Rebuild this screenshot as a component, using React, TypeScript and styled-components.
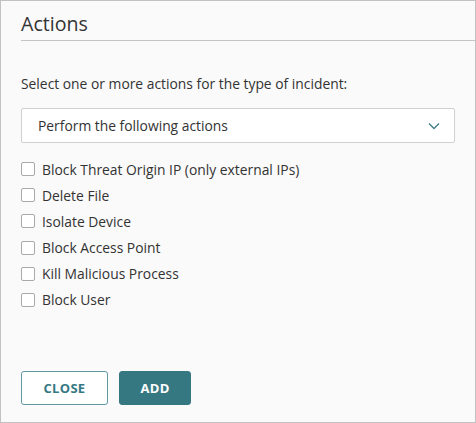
import React from 'react';
import styled, { createGlobalStyle } from 'styled-components';

const actions = [
  'Block Threat Origin IP (only external IPs)',
  'Delete File',
  'Isolate Device',
  'Block Access Point',
  'Kill Malicious Process',
  'Block User',
];

const GlobalStyle = createGlobalStyle`
  html, body {
    margin: 0;
    padding: 0;
    background: #ffffff;
  }
  * {
    box-sizing: border-box;
  }
`;

const Panel = styled.div`
  width: 476px;
  height: 423px;
  border: 1px solid #c2c2c2;
  background: #fafafa;
  font-family: 'Open Sans', 'Liberation Sans', sans-serif;
  color: #333333;
  padding-left: 20px;
  display: flex;
  flex-direction: column;
`;

const Title = styled.h2`
  margin: 0;
  padding: 12px 0 5px 0;
  font-size: 19.6px;
  font-weight: 400;
  line-height: 22px;
  color: #333333;
  border-bottom: 1px solid #c4c4c4;
`;

const Body = styled.div`
  padding-right: 20px;
  display: flex;
  flex-direction: column;
`;

const Prompt = styled.p`
  margin: 33px 0 0 0;
  font-size: 13.85px;
  line-height: 20px;
`;

const Select = styled.div`
  margin-top: 14px;
  height: 35px;
  border: 1px solid #d0d0d0;
  border-radius: 2px;
  background: #ffffff;
  display: flex;
  align-items: center;
  justify-content: space-between;
  padding: 0 14px 0 16px;
  font-size: 13.85px;
`;

const List = styled.ul`
  list-style: none;
  margin: 16px 0 0 0;
  padding: 0;
  display: flex;
  flex-direction: column;
  gap: 6.2px;
`;

const Row = styled.li`
  display: flex;
  align-items: center;
  height: 20px;
  font-size: 13.85px;
`;

const Box = styled.span`
  width: 14px;
  height: 14px;
  border: 1px solid #a9a9a9;
  border-radius: 2px;
  background: #ffffff;
  margin-right: 7px;
  flex-shrink: 0;
`;

const Footer = styled.div`
  margin-top: auto;
  padding-bottom: 17px;
  display: flex;
  gap: 11px;
`;

const Button = styled.button<{ $primary?: boolean }>`
  height: 34px;
  padding: 0;
  width: ${(p) => (p.$primary ? '72px' : '87px')};
  border-radius: 3px;
  border: 1px solid ${(p) => (p.$primary ? '#367882' : '#5f9aa2')};
  background: ${(p) => (p.$primary ? '#367882' : '#ffffff')};
  color: ${(p) => (p.$primary ? '#ffffff' : '#367882')};
  font-family: 'Open Sans', 'Liberation Sans', sans-serif;
  font-weight: 700;
  font-size: 13px;
  letter-spacing: 0.3px;
`;

const Chevron = () => (
  <svg width="12" height="8" viewBox="0 0 12 8" fill="none">
    <path d="M1 1.5 L6 6.5 L11 1.5" stroke="#3f8089" strokeWidth="1.4" />
  </svg>
);

export default function App() {
  return (
    <>
      <GlobalStyle />
      <Panel>
        <Title>Actions</Title>
        <Body>
          <Prompt>Select one or more actions for the type of incident:</Prompt>
          <Select>
            <span>Perform the following actions</span>
            <Chevron />
          </Select>
          <List>
            {actions.map((a) => (
              <Row key={a}>
                <Box />
                {a}
              </Row>
            ))}
          </List>
        </Body>
        <Footer>
          <Button>CLOSE</Button>
          <Button $primary>ADD</Button>
        </Footer>
      </Panel>
    </>
  );
}
